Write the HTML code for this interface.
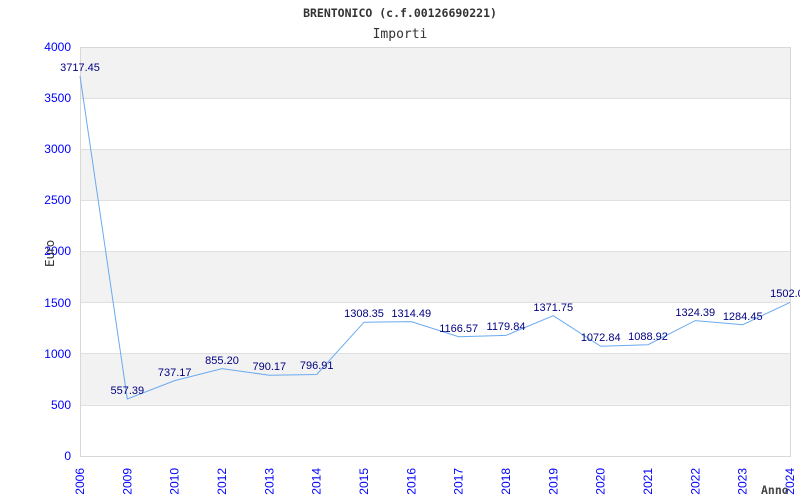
<!DOCTYPE html>
<html><head><meta charset="utf-8"><style>
html,body{margin:0;padding:0;background:#fff;}
svg{display:block;}
</style></head><body>
<svg width="800" height="500" viewBox="0 0 800 500" xmlns="http://www.w3.org/2000/svg" font-family="'Liberation Sans', sans-serif">
<text x="400" y="17" text-anchor="middle" font-family="'DejaVu Sans Mono', monospace" font-weight="bold" font-size="11.5" fill="#333">BRENTONICO (c.f.00126690221)</text>
<text x="400" y="38" text-anchor="middle" font-family="'DejaVu Sans Mono', monospace" font-size="13" fill="#333">Importi</text>
<g>
<rect x="80" y="47" width="710" height="51.1" fill="#f2f2f2"/>
<rect x="80" y="149.25" width="710" height="51.1" fill="#f2f2f2"/>
<rect x="80" y="251.5" width="710" height="51.1" fill="#f2f2f2"/>
<rect x="80" y="353.75" width="710" height="51.1" fill="#f2f2f2"/>
<g stroke="#e0e0e0" stroke-width="1">
<line x1="80" y1="98.5" x2="790" y2="98.5"/>
<line x1="80" y1="149.5" x2="790" y2="149.5"/>
<line x1="80" y1="200.5" x2="790" y2="200.5"/>
<line x1="80" y1="251.5" x2="790" y2="251.5"/>
<line x1="80" y1="302.5" x2="790" y2="302.5"/>
<line x1="80" y1="353.5" x2="790" y2="353.5"/>
<line x1="80" y1="405.5" x2="790" y2="405.5"/>
</g>
<rect x="80.5" y="47.5" width="710" height="409" fill="none" stroke="#d8d8d8"/>
</g>
<g fill="#0000ff" font-size="12" text-anchor="end">
<text x="71" y="51">4000</text><text x="71" y="102">3500</text><text x="71" y="153">3000</text><text x="71" y="204">2500</text><text x="71" y="255">2000</text><text x="71" y="307">1500</text><text x="71" y="358">1000</text><text x="71" y="409">500</text><text x="71" y="460">0</text>
</g>
<text transform="translate(54,267) rotate(-90)" font-size="12" fill="#333" font-family="'DejaVu Sans', sans-serif">Euro</text>
<g fill="#0000ff" font-size="12" text-anchor="end">
<text transform="translate(84,468) rotate(-90)">2006</text>
<text transform="translate(131.3,468) rotate(-90)">2009</text>
<text transform="translate(178.7,468) rotate(-90)">2010</text>
<text transform="translate(226,468) rotate(-90)">2012</text>
<text transform="translate(273.3,468) rotate(-90)">2013</text>
<text transform="translate(320.7,468) rotate(-90)">2014</text>
<text transform="translate(368,468) rotate(-90)">2015</text>
<text transform="translate(415.3,468) rotate(-90)">2016</text>
<text transform="translate(462.7,468) rotate(-90)">2017</text>
<text transform="translate(510,468) rotate(-90)">2018</text>
<text transform="translate(557.3,468) rotate(-90)">2019</text>
<text transform="translate(604.7,468) rotate(-90)">2020</text>
<text transform="translate(652,468) rotate(-90)">2021</text>
<text transform="translate(699.3,468) rotate(-90)">2022</text>
<text transform="translate(746.7,468) rotate(-90)">2023</text>
<text transform="translate(794,468) rotate(-90)">2024</text>
</g>
<text x="761" y="494" font-size="11.5" font-weight="bold" fill="#444" font-family="'DejaVu Sans Mono', monospace">Anno</text>
<polyline fill="none" stroke="#6aaaf0" stroke-width="1" points="80,76 127.3,399 174.7,380.6 222,368.6 269.3,375.2 316.7,374.5 364,322.2 411.3,321.6 458.7,336.7 506,335.4 553.3,315.7 600.7,346.3 648,344.7 695.3,320.6 742.7,324.7 790,302.4"/>
<g fill="#000080" font-size="11" text-anchor="middle">
<text x="80" y="71">3717.45</text>
<text x="127.3" y="394">557.39</text>
<text x="174.7" y="376">737.17</text>
<text x="222" y="364">855.20</text>
<text x="269.3" y="370">790.17</text>
<text x="316.7" y="369">796.91</text>
<text x="364" y="317">1308.35</text>
<text x="411.3" y="317">1314.49</text>
<text x="458.7" y="332">1166.57</text>
<text x="506" y="330">1179.84</text>
<text x="553.3" y="311">1371.75</text>
<text x="600.7" y="341">1072.84</text>
<text x="648" y="340">1088.92</text>
<text x="695.3" y="316">1324.39</text>
<text x="742.7" y="320">1284.45</text>
<text x="790" y="297">1502.00</text>
</g>
</svg>
</body></html>
